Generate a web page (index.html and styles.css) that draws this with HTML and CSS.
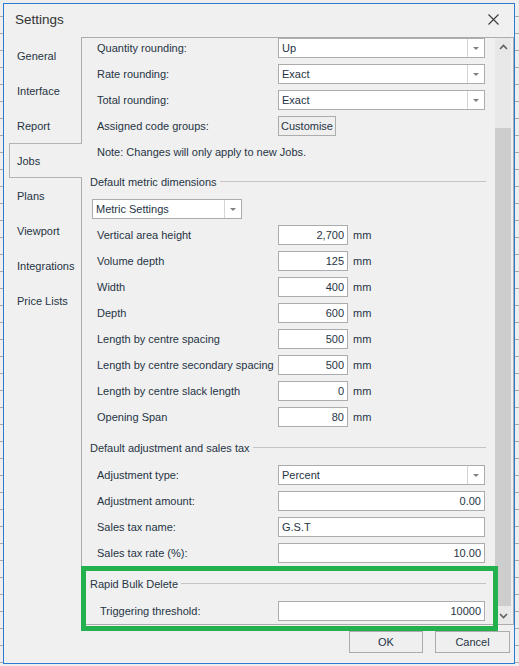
FILE: index.html
```html
<!DOCTYPE html>
<html>
<head>
<meta charset="utf-8" />
<title>Settings</title>
<link rel="stylesheet" href="styles.css">
</head>
<body>
<div class="window">
  <div class="titlebar">
    <span class="title">Settings</span>
    <svg class="close" width="11" height="11" viewBox="0 0 11 11"><path d="M0.5 0.5 L10.5 10.5 M10.5 0.5 L0.5 10.5" stroke="#3a3a3a" stroke-width="1.1" fill="none"/></svg>
  </div>
  <div class="main">
    <ul class="tabs">
      <li>General</li>
      <li>Interface</li>
      <li>Report</li>
      <li class="active">Jobs</li>
      <li>Plans</li>
      <li>Viewport</li>
      <li>Integrations</li>
      <li>Price Lists</li>
    </ul>
    <div class="panel">
      <div class="content">
        <div class="row"><span class="label">Quantity rounding:</span><div class="combo"><span>Up</span><i class="drop"></i></div></div>
        <div class="row"><span class="label">Rate rounding:</span><div class="combo"><span>Exact</span><i class="drop"></i></div></div>
        <div class="row"><span class="label">Total rounding:</span><div class="combo"><span>Exact</span><i class="drop"></i></div></div>
        <div class="row"><span class="label">Assigned code groups:</span><div class="button small">Customise</div></div>
        <div class="row note">Note: Changes will only apply to new Jobs.</div>

        <div class="group">Default metric dimensions</div>
        <div class="row"><div class="combo metric"><span>Metric Settings</span><i class="drop"></i></div></div>
        <div class="row"><span class="label">Vertical area height</span><div class="textbox num short">2,700</div><span class="unit">mm</span></div>
        <div class="row"><span class="label">Volume depth</span><div class="textbox num short">125</div><span class="unit">mm</span></div>
        <div class="row"><span class="label">Width</span><div class="textbox num short">400</div><span class="unit">mm</span></div>
        <div class="row"><span class="label">Depth</span><div class="textbox num short">600</div><span class="unit">mm</span></div>
        <div class="row"><span class="label">Length by centre spacing</span><div class="textbox num short">500</div><span class="unit">mm</span></div>
        <div class="row"><span class="label">Length by centre secondary spacing</span><div class="textbox num short">500</div><span class="unit">mm</span></div>
        <div class="row"><span class="label">Length by centre slack length</span><div class="textbox num short">0</div><span class="unit">mm</span></div>
        <div class="row"><span class="label">Opening Span</span><div class="textbox num short">80</div><span class="unit">mm</span></div>

        <div class="group">Default adjustment and sales tax</div>
        <div class="row"><span class="label">Adjustment type:</span><div class="combo"><span>Percent</span><i class="drop"></i></div></div>
        <div class="row"><span class="label">Adjustment amount:</span><div class="textbox num">0.00</div></div>
        <div class="row"><span class="label">Sales tax name:</span><div class="textbox">G.S.T</div></div>
        <div class="row"><span class="label">Sales tax rate (%):</span><div class="textbox num">10.00</div></div>

        <div class="group">Rapid Bulk Delete</div>
        <div class="row"><span class="label indent">Triggering threshold:</span><div class="textbox num">10000</div></div>
      </div>
      <div class="scrollbar">
        <div class="arrow"><svg width="9" height="6" viewBox="0 0 9 6"><path d="M1 5 L4.5 1.5 L8 5" stroke="#606060" stroke-width="1.6" fill="none"/></svg></div>
        <div class="track"><div class="thumb"></div></div>
        <div class="arrow"><svg width="9" height="6" viewBox="0 0 9 6"><path d="M1 1 L4.5 4.5 L8 1" stroke="#606060" stroke-width="1.6" fill="none"/></svg></div>
      </div>
    </div>
  </div>
  <div class="footer">
    <div class="button ok">OK</div>
    <div class="button cancel">Cancel</div>
  </div>
  <div class="highlight"></div>
</div>
</body>
</html>
```
FILE: styles.css
```css
* {
  box-sizing: border-box;
  margin: 0;
  padding: 0;
}
body {
  background-color: #eeeeee;
  background-image: repeating-linear-gradient(to bottom, transparent 0, transparent 16px, #a9a9a9 16px, #a9a9a9 17px);
  color: #263445;
  font-family: 'Liberation Sans', Arial, sans-serif;
  font-size: 11px;
}
.window {
  background: #f0f0f0;
  border: 1px solid #2b7bd4;
  display: flex;
  flex-direction: column;
  height: 661px;
  margin: 3px 0 0 3px;
  position: relative;
  width: 512px;
}
.titlebar {
  align-items: center;
  display: flex;
  height: 33px;
  justify-content: space-between;
  padding: 0 15px 3px 11px;
}
.title {
  color: #333;
  font-size: 13.5px;
}
.main {
  display: flex;
  height: 588px;
}
.tabs {
  list-style: none;
  padding: 1px 0 0 5px;
  width: 77px;
}
.tabs li {
  align-items: center;
  display: flex;
  height: 35px;
  padding-left: 8px;
}
.tabs li.active {
  background: #f0f0f0;
  border: 1px solid #b4b4b4;
  border-right: 0 none;
  margin-right: -1px;
  padding-left: 7px;
  position: relative;
  z-index: 2;
}
.panel {
  border: 1px solid #acacac;
  display: flex;
  flex: 1;
}
.content {
  display: flex;
  flex-direction: column;
  overflow: hidden;
  padding: 0 10px 0 15px;
  width: 413px;
}
.content > * {
  flex-shrink: 0;
}
.row {
  align-items: center;
  display: flex;
  height: 20px;
  margin-bottom: 6px;
  white-space: nowrap;
}
.row.note {
  margin-bottom: 5px;
}
.label {
  width: 181px;
}
.label.indent {
  padding-left: 3px;
}
.combo, .textbox {
  align-items: center;
  background: #fff;
  border: 1px solid #acacac;
  display: flex;
  height: 20px;
  width: 207px;
}
.combo span {
  flex: 1;
  padding-left: 3px;
}
.combo .drop {
  align-items: center;
  border-left: 1px solid #d4d4d4;
  display: flex;
  height: 100%;
  justify-content: center;
  width: 17px;
}
.combo .drop::before {
  border-left: 3px solid transparent;
  border-right: 3px solid transparent;
  border-top: 3px solid #808080;
  content: '';
}
.combo.metric {
  margin-left: -5px;
  width: 150px;
}
.textbox {
  padding: 0 3px;
}
.textbox.num {
  justify-content: flex-end;
}
.textbox.short {
  width: 70px;
}
.unit {
  margin-left: 5px;
}
.group {
  align-items: center;
  display: flex;
  height: 20px;
  margin: 5px -1px 7px -7px;
}
.group::after {
  background: #c4c4c4;
  content: '';
  flex: 1;
  height: 1px;
  margin: -1px 0 0 3px;
}
.button {
  align-items: center;
  background: #efefef;
  border: 1px solid #acacac;
  display: flex;
  justify-content: center;
}
.button.small {
  height: 20px;
  width: 58px;
}
.scrollbar {
  background: #e8e8e8;
  display: flex;
  flex-direction: column;
  margin-right: 2px;
  width: 16px;
}
.scrollbar .arrow {
  align-items: center;
  display: flex;
  height: 17px;
  justify-content: center;
}
.scrollbar .track {
  flex: 1;
}
.scrollbar .thumb {
  background: #cdcdcd;
  height: 478px;
  margin-top: 73px;
}
.footer {
  display: flex;
  gap: 12px;
  justify-content: flex-end;
  padding: 6px 4px 0 0;
}
.footer .button {
  height: 22px;
  width: 74px;
}
.footer .cancel {
  width: 75px;
}
.highlight {
  border: 5px solid #22b14c;
  height: 65px;
  left: 77px;
  position: absolute;
  top: 562px;
  width: 417px;
}
```
